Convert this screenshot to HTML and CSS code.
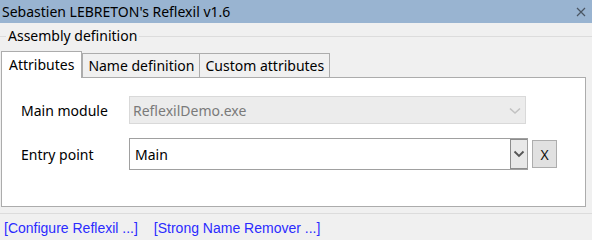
FILE: index.html
```html
<!DOCTYPE html>
<html>
<head>
<meta charset="utf-8">
<link rel="stylesheet" href="styles.css">
</head>
<body>
<div class="titlebar">
  <span class="title">Sebastien LEBRETON's Reflexil v1.6</span>
  <svg class="close" width="10" height="10" viewBox="0 0 10 10"><path d="M1 1L9 9M9 1L1 9" stroke="#4a5563" stroke-width="1.2"/></svg>
</div>
<fieldset class="group">
  <legend class="legend">Assembly definition</legend>
  <div class="tabs">
    <div class="tab active">Attributes</div>
    <div class="tab">Name definition</div>
    <div class="tab">Custom attributes</div>
  </div>
  <div class="panel">
    <div class="form">
      <div class="label">Main module</div>
      <div class="combo disabled"><span class="value">ReflexilDemo.exe</span><span class="chev"><svg width="12" height="8" viewBox="0 0 12 8"><path d="M1 1.5L6 6L11 1.5" fill="none" stroke="#c2c2c2" stroke-width="1.6"/></svg></span></div>
      <div></div>
      <div class="label">Entry point</div>
      <div class="combo active"><span class="value">Main</span><span class="btn"><svg width="12" height="8" viewBox="0 0 12 8"><path d="M1.5 1.5L6 6L10.5 1.5" fill="none" stroke="#555" stroke-width="1.8"/></svg></span></div>
      <div class="xbtn">X</div>
    </div>
  </div>
</fieldset>
<div class="links">
  <a class="link">[Configure Reflexil ...]</a>
  <a class="link">[Strong Name Remover ...]</a>
</div>
</body>
</html>
```
FILE: styles.css
```css
html, body {
  margin: 0;
  padding: 0;
}
body {
  width: 592px;
  height: 240px;
  overflow: hidden;
  background: #f0f0f0;
  font-family: "Noto Sans", "Open Sans", sans-serif;
  font-size: 14px;
  color: #000;
}
.titlebar {
  height: 23px;
  background: #99b4d1;
  display: flex;
  align-items: center;
  justify-content: space-between;
  padding: 0 6px 0 2px;
}
.title {
  font-size: 14px;
  line-height: 23px;
}
.close {
  display: block;
}
.group {
  margin: 4px 0 0 -2px;
  padding: 0 3px 6px 3px;
  border: 1px solid #dcdcdc;
  border-left: none;
  border-right: none;
  min-width: 0;
}
.legend {
  margin-left: 5px;
  padding: 0 2px;
  font-size: 14px;
  line-height: 18px;
}
.tabs {
  display: flex;
  align-items: flex-end;
  margin-top: 6px;
  height: 26px;
  position: relative;
  z-index: 1;
}
.tab {
  height: 24px;
  box-sizing: border-box;
  border: 1px solid #acacac;
  border-bottom: none;
  background: #f0f0f0;
  padding: 0 5px;
  line-height: 23px;
  font-size: 14px;
  margin-left: -1px;
}
.tab.active {
  height: 27px;
  margin-bottom: -1px;
  background: #fff;
  margin-left: 0;
  margin-right: 1px;
  padding: 1px 7px 0 7px;
  line-height: 23px;
  z-index: 2;
}
.panel {
  width: 585px;
  height: 130px;
  box-sizing: border-box;
  border: 1px solid #acacac;
  background: #fff;
}
.form {
  display: grid;
  grid-template-columns: 108px 403px 25px;
  grid-template-rows: 28px 32px;
  row-gap: 14px;
  padding: 18px 0 0 19px;
  align-items: center;
}
.label {
  font-size: 14px;
}
.combo {
  box-sizing: border-box;
  display: flex;
  align-items: center;
  justify-self: start;
}
.combo .value {
  flex: 1;
  padding-left: 3px;
  font-size: 14px;
}
.combo.disabled {
  border: 1px solid #d9d9d9;
  background: #ececec;
  color: #7a7a7a;
  height: 28px;
  width: 397px;
}
.combo.disabled .chev {
  width: 20px;
  display: flex;
  justify-content: center;
  padding-top: 2px;
}
.combo.active {
  border: 1px solid #a0a0a0;
  background: #fff;
  height: 32px;
  width: 399px;
}
.combo.active .btn {
  width: 17px;
  height: 30px;
  box-sizing: border-box;
  border: 1px solid #8c8c8c;
  border-right: none;
  background: #e8e8e8;
  display: flex;
  align-items: center;
  justify-content: center;
}
.combo.active .value {
  padding-left: 5px;
  color: #000;
}
.xbtn {
  width: 25px;
  height: 28px;
  box-sizing: border-box;
  border: 1px solid #adadad;
  background: #e1e1e1;
  display: flex;
  align-items: center;
  justify-content: center;
  font-size: 14px;
  color: #111;
}
.links {
  display: flex;
  gap: 16px;
  padding: 6px 0 0 4px;
  font-family: "Liberation Sans", Arial, sans-serif;
  font-size: 14px;
}
.link {
  color: #2b2bff;
}
```
